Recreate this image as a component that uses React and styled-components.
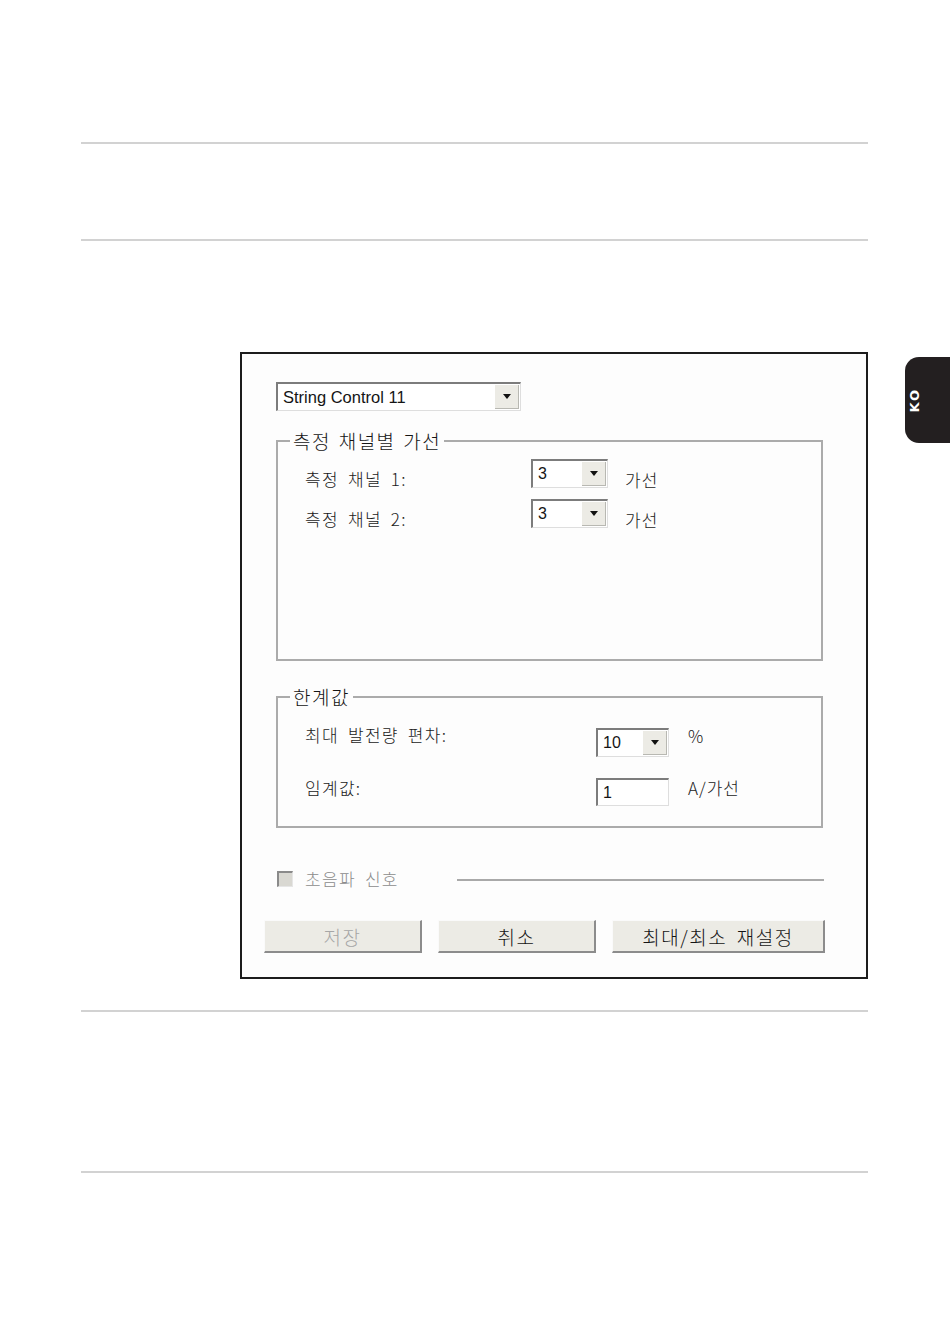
import React from 'react';
import styled, { createGlobalStyle } from 'styled-components';

const GlobalStyle = createGlobalStyle`
  body {
    margin: 0;
    background: #ffffff;
    font-family: "Liberation Sans", "Noto Sans CJK KR", sans-serif;
  }
`;

const Page = styled.div`
  box-sizing: border-box;
  width: 950px;
  min-height: 1344px;
  padding: 142px 0 0 81px;
  overflow: hidden;
`;

const Rule = styled.div`
  width: 787px;
  height: 2px;
  background: #d2d2d2;
  margin-top: ${(p) => p.$mt || 0}px;
`;

const FigureRow = styled.div`
  display: flex;
  align-items: flex-start;
  width: 869px;
  margin-top: 111px;
`;

const Figure = styled.div`
  box-sizing: border-box;
  display: flex;
  flex-direction: column;
  width: 628px;
  height: 627px;
  margin-left: 159px;
  padding: 28px 0 0 22px;
  border: 2px solid #1c1c1c;
  background: #fdfdfd;
`;

const Tab = styled.div`
  box-sizing: border-box;
  display: flex;
  align-items: center;
  width: 45px;
  height: 86px;
  margin: 5px 0 0 37px;
  padding-left: 2px;
  background: #231f20;
  border-radius: 14px 0 0 14px;
`;

const TabText = styled.span`
  writing-mode: vertical-rl;
  transform: rotate(180deg);
  color: #ffffff;
  font-family: "DejaVu Sans", sans-serif;
  font-weight: 700;
  font-size: 13px;
  letter-spacing: 2px;
`;

const Combo = styled.div`
  box-sizing: border-box;
  display: flex;
  flex-shrink: 0;
  width: ${(p) => p.$w}px;
  height: ${(p) => p.$h || 29}px;
  margin-left: ${(p) => p.$ml || 0}px;
  border-style: solid;
  border-width: 2px 1px 1px 2px;
  border-color: #7c7c7c #dedede #dedede #7c7c7c;
  background: #ffffff;
`;

const ComboValue = styled.div`
  flex: 1;
  display: flex;
  align-items: center;
  padding-left: 5px;
  font-family: "Liberation Sans", sans-serif;
  font-size: ${(p) => p.$size || 16}px;
  color: #151515;
`;

const DropButton = styled.div`
  display: flex;
  align-items: center;
  justify-content: center;
  width: 23px;
  margin: 1px 1px 1px 0;
  background: #ecebe5;
  border-right: 1px solid #b8b8b2;
  border-bottom: 1px solid #b8b8b2;
`;

const Arrow = styled.div`
  width: 0;
  height: 0;
  border-left: 4px solid transparent;
  border-right: 4px solid transparent;
  border-top: 5px solid #111111;
`;

const Group = styled.fieldset`
  box-sizing: border-box;
  min-width: 0;
  width: 547px;
  height: ${(p) => p.$h}px;
  margin: ${(p) => p.$mt}px 0 0 12px;
  padding: 0 0 0 12px;
  border: 2px solid #ababab;
`;

const Legend = styled.legend`
  padding: 0 3px;
  font-family: "Noto Sans CJK KR", sans-serif;
  font-weight: 300;
  font-size: 19px;
  line-height: 22px;
  letter-spacing: 1.5px;
  word-spacing: 2px;
  color: #141414;
`;

const GroupBody = styled.div`
  display: flex;
  flex-direction: column;
  gap: ${(p) => p.$gap}px;
  padding: ${(p) => p.$pt}px 0 0 15px;
`;

const FieldRow = styled.div`
  display: flex;
  align-items: flex-start;
  height: ${(p) => p.$h || 29}px;
`;

const Label = styled.div`
  flex-shrink: 0;
  width: ${(p) => (p.$w ? `${p.$w}px` : 'auto')};
  margin-top: ${(p) => p.$dy || 0}px;
  font-family: "Noto Sans CJK KR", sans-serif;
  font-weight: 300;
  font-size: 17px;
  line-height: 24px;
  letter-spacing: 1.3px;
  word-spacing: 4px;
  color: ${(p) => (p.$disabled ? '#8c8c8c' : '#1a1a1a')};
`;

const Unit = styled.div`
  margin: ${(p) => p.$dy || 0}px 0 0 ${(p) => p.$ml}px;
  font-family: "Noto Sans CJK KR", sans-serif;
  font-weight: 300;
  font-size: 17px;
  line-height: 24px;
  letter-spacing: 1px;
  color: #1a1a1a;
`;

const CheckRow = styled.div`
  display: flex;
  align-items: center;
  width: 547px;
  height: 16px;
  margin: 43px 0 0 13px;
`;

const CheckBox = styled.div`
  box-sizing: border-box;
  width: 16px;
  height: 16px;
  margin-right: 12px;
  background: #d9d8d2;
  border-style: solid;
  border-width: 2px 1px 1px 2px;
  border-color: #8a8a8a #e6e6e6 #e6e6e6 #8a8a8a;
`;

const CheckLine = styled.div`
  flex: 1;
  height: 2px;
  margin: 2px 0 0 58px;
  background: #a9a9a9;
`;

const ButtonRow = styled.div`
  display: flex;
  gap: 16px;
  margin-top: 33px;
`;

const Button = styled.div`
  box-sizing: border-box;
  display: flex;
  align-items: center;
  justify-content: center;
  width: ${(p) => p.$w}px;
  height: 33px;
  background: #ecebe5;
  border-style: solid;
  border-width: 1px 2px 2px 1px;
  border-color: #fafafa #8c8c8c #8c8c8c #fafafa;
  font-family: "Noto Sans CJK KR", sans-serif;
  font-weight: 300;
  font-size: 19px;
  letter-spacing: 1.5px;
  word-spacing: 4px;
  color: ${(p) => (p.$disabled ? '#a6a6a6' : '#141414')};
`;

function Select({ value, width, ml, size }) {
  return (
    <Combo $w={width} $ml={ml}>
      <ComboValue $size={size}>{value}</ComboValue>
      <DropButton>
        <Arrow />
      </DropButton>
    </Combo>
  );
}

function App() {
  return (
    <>
      <GlobalStyle />
      <Page>
        <Rule />
        <Rule $mt={95} />
        <FigureRow>
          <Figure>
            <Select value="String Control 11" width={245} ml={12} size={16.5} />

            <Group $mt={19} $h={231}>
              <Legend>측정 채널별 가선</Legend>
              <GroupBody $pt={7} $gap={11}>
                <FieldRow>
                  <Label $w={226} $dy={8}>측정 채널 1:</Label>
                  <Select value="3" width={77} />
                  <Unit $ml={17} $dy={9}>가선</Unit>
                </FieldRow>
                <FieldRow>
                  <Label $w={226} $dy={8}>측정 채널 2:</Label>
                  <Select value="3" width={77} />
                  <Unit $ml={17} $dy={9}>가선</Unit>
                </FieldRow>
              </GroupBody>
            </Group>

            <Group $mt={25} $h={142}>
              <Legend>한계값</Legend>
              <GroupBody $pt={20} $gap={21}>
                <FieldRow>
                  <Label $w={291} $dy={-5}>최대 발전량 편차:</Label>
                  <Select value="10" width={73} />
                  <Unit $ml={19} $dy={-4}>%</Unit>
                </FieldRow>
                <FieldRow $h={28}>
                  <Label $w={291} $dy={-2}>임계값:</Label>
                  <Combo $w={73} $h={28}>
                    <ComboValue>1</ComboValue>
                  </Combo>
                  <Unit $ml={19} $dy={-2}>A/가선</Unit>
                </FieldRow>
              </GroupBody>
            </Group>

            <CheckRow>
              <CheckBox />
              <Label $disabled>초음파 신호</Label>
              <CheckLine />
            </CheckRow>

            <ButtonRow>
              <Button $w={158} $disabled>저장</Button>
              <Button $w={158}>취소</Button>
              <Button $w={213}>최대/최소 재설정</Button>
            </ButtonRow>
          </Figure>
          <Tab>
            <TabText>KO</TabText>
          </Tab>
        </FigureRow>
        <Rule $mt={31} />
        <Rule $mt={159} />
      </Page>
    </>
  );
}

export default App;
